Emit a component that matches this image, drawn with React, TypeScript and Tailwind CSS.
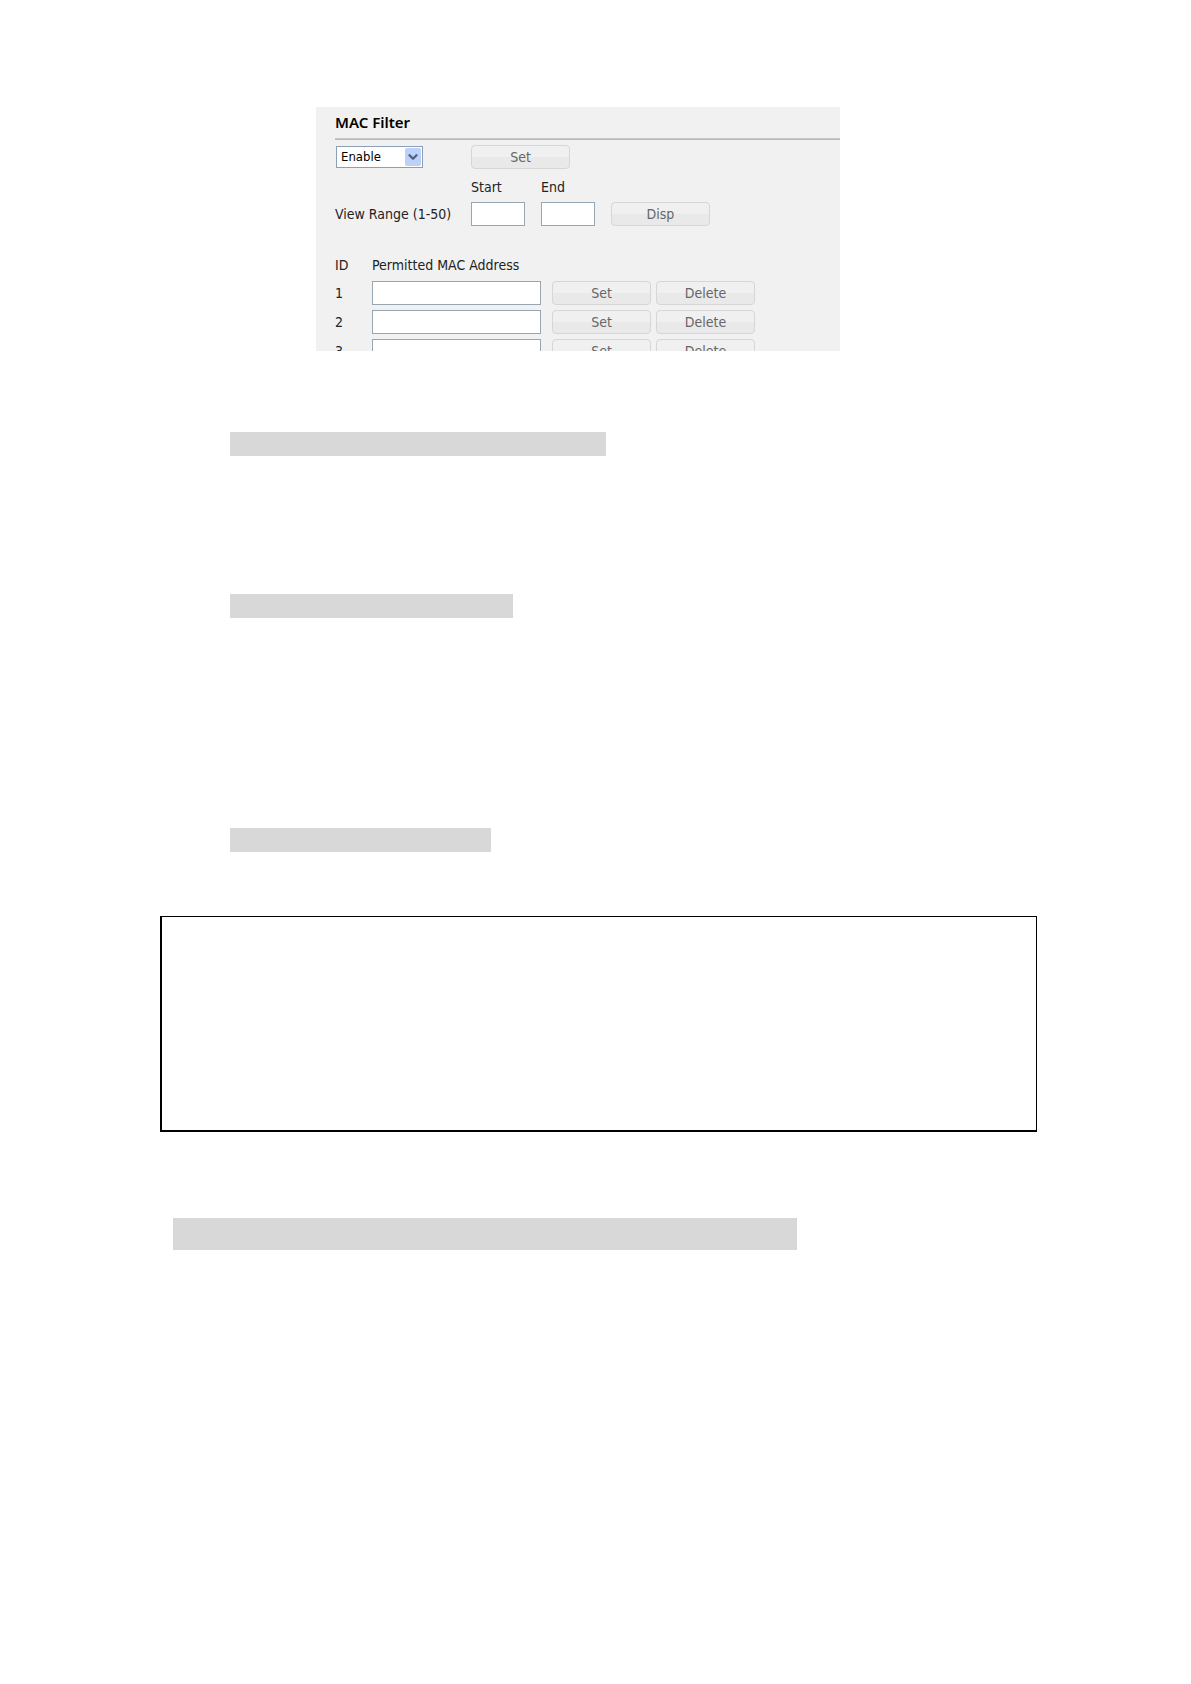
import { ChevronDown } from 'lucide-react';
import type { ReactNode } from 'react';

const rows = [1, 2, 3];

function PanelButton({ children }: { children: ReactNode }) {
  return (
    <button
      type="button"
      className="block h-6 w-[99px] rounded border border-[#d6d6d6] bg-linear-to-b
                 from-[#f0f0f0] from-50% to-[#e9e9e9] to-50% text-center text-sm leading-5 text-[#666]"
    >
      {children}
    </button>
  );
}

function RangeInput({ id }: { id: string }) {
  return (
    <input
      id={id}
      type="text"
      className="h-6 w-[54px] border border-[#98a6b4] bg-white px-1 text-sm"
    />
  );
}

function MacFilter() {
  return (
    <section className="ml-[156px] h-[244px] max-w-[524px] overflow-hidden bg-[#f1f1f1] pl-[19px] text-[#222]">
      <h1 className="h-[31px] pt-1 font-['Noto_Sans',sans-serif] text-[15px] leading-[22px] font-semibold text-black">
        MAC Filter
      </h1>
      <div className="h-0.5 border-t border-[#c8c8c8] bg-[#b8b8b8]" />

      <div className="mt-[5px] grid grid-cols-[136px_70px_70px_99px] items-center">
        <div className="relative ml-px h-[22px] w-[87px]">
          <select
            aria-label="MAC filter mode"
            className="block h-full w-full appearance-none border border-[#8ba0b8] bg-white pl-1 text-[13px] leading-5 text-black"
          >
            <option>Enable</option>
            <option>Disable</option>
          </select>
          <span className="pointer-events-none absolute top-0.5 right-0.5 flex h-[18px] w-4 items-center justify-center rounded-xs bg-[#bdd0f8]">
            <ChevronDown size={14} strokeWidth={4} color="#4d6185" />
          </span>
        </div>
        <PanelButton>Set</PanelButton>
      </div>

      <div className="mt-1.5 grid grid-cols-[136px_70px_70px_99px] items-center text-sm leading-6">
        <label htmlFor="start" className="col-start-2">
          Start
        </label>
        <label htmlFor="end">End</label>
      </div>
      <div className="mt-[3px] grid grid-cols-[136px_70px_70px_99px] items-center text-sm">
        <span>View Range (1-50)</span>
        <RangeInput id="start" />
        <RangeInput id="end" />
        <PanelButton>Disp</PanelButton>
      </div>

      <table className="mt-[27px] table-fixed border-collapse text-left text-sm">
        <colgroup>
          <col className="w-[37px]" />
          <col className="w-[180px]" />
          <col className="w-[104px]" />
          <col className="w-[99px]" />
        </colgroup>
        <thead>
          <tr className="h-7 align-top leading-6">
            <th className="p-0 font-normal">ID</th>
            <th className="p-0 font-normal">Permitted MAC Address</th>
          </tr>
        </thead>
        <tbody>
          {rows.map((id) => (
            <tr key={id} className="h-[29px] align-top">
              <td className="p-0 leading-6">{id}</td>
              <td className="p-0">
                <input
                  type="text"
                  aria-label={`MAC address ${id}`}
                  className="block h-6 w-[169px] border border-[#98a6b4] bg-white px-1"
                />
              </td>
              <td className="p-0">
                <PanelButton>Set</PanelButton>
              </td>
              <td className="p-0">
                <PanelButton>Delete</PanelButton>
              </td>
            </tr>
          ))}
        </tbody>
      </table>
    </section>
  );
}

export default function App() {
  return (
    <main className="min-h-screen bg-white pt-[107px] pr-[154px] pb-[434px] pl-40 font-['DejaVu_Sans_Condensed','DejaVu_Sans',sans-serif]">
      <MacFilter />
      {/* heading bands */}
      <div className="mt-[81px] ml-[70px] h-6 max-w-[376px] bg-[#d8d8d8]" />
      <div className="mt-[138px] ml-[70px] h-6 max-w-[283px] bg-[#d8d8d8]" />
      <div className="mt-[210px] ml-[70px] h-6 max-w-[261px] bg-[#d8d8d8]" />
      {/* note box */}
      <div className="mt-16 h-[216px] border-t border-r border-b-2 border-l-2 border-black" />
      <div className="mt-[86px] ml-[13px] h-8 max-w-[624px] bg-[#d8d8d8]" />
    </main>
  );
}
